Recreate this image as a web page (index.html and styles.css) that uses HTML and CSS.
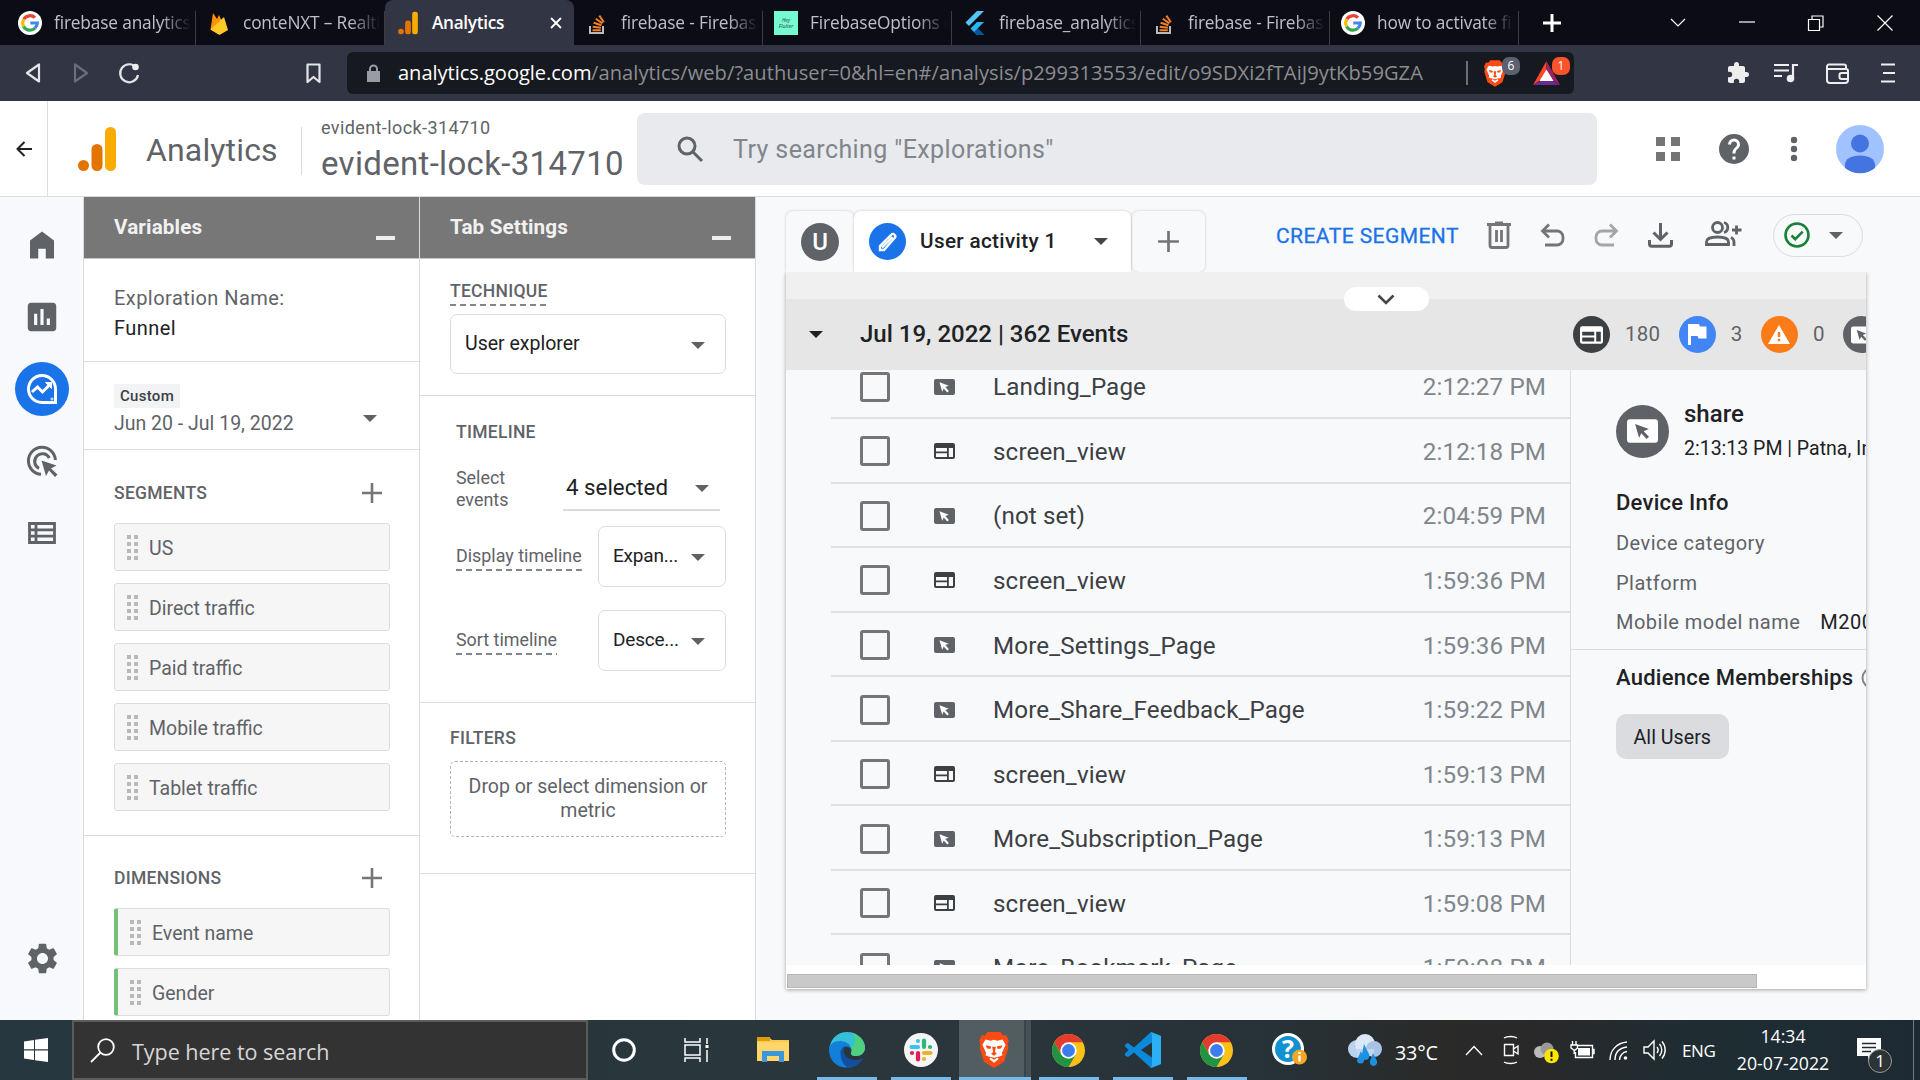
FILE: index.html
```
<!DOCTYPE html>
<html lang="en">
<head>
<meta charset="utf-8">
<title>Analytics</title>
<link rel="stylesheet" href="styles.css">
</head>
<body>
<svg width="0" height="0" class="sprite">
  <symbol id="google" viewBox="0 0 24 24"><circle cx="12" cy="12" r="12" fill="#fff"/><g fill="none" stroke-width="3.2"><path d="M5.8 8.2A7.3 7.3 0 0 1 17 6.7" stroke="#ea4335"/><path d="M5.6 15.4a7.3 7.3 0 0 1 .2-7.2" stroke="#fbbc05"/><path d="M17 17.2A7.3 7.3 0 0 1 5.6 15.4" stroke="#34a853"/><path d="M12.3 12h7a7.3 7.3 0 0 1-2.3 5.2" stroke="#4285f4"/></g></symbol>
  <symbol id="stack" viewBox="0 0 24 24"><path d="M5 15v7h13v-7" fill="none" stroke="#bcbbbb" stroke-width="2"/><g stroke="#f48024" stroke-width="2"><path d="M7.500 19.200h8.300M7.700 15.800l8.200.9M8.600 11.800l7.800 2.400M10.800 7.800l6.600 4.600M14.300 4.600l4.600 6.600"/></g></symbol>
  <symbol id="home" viewBox="0 0 24 24"><path d="M4 21V9l8-6 8 6v12h-5.500v-6.500h-5V21z"/></symbol>
  <symbol id="chart" viewBox="0 0 24 24"><path d="M19 3H5c-1.100 0-2 .9-2 2v14c0 1.100.9 2 2 2h14c1.100 0 2-.9 2-2V5c0-1.100-.9-2-2-2zM9 17H7v-7h2zm4 0h-2V7h2zm4 0h-2v-4h2z"/></symbol>
  <symbol id="gear" viewBox="0 0 24 24"><path d="M19.140 12.940c.04-.3.06-.61.06-.94 0-.32-.02-.64-.07-.94l2.030-1.580c.18-.14.23-.41.12-.61l-1.920-3.320c-.12-.22-.37-.29-.59-.22l-2.390.96c-.5-.38-1.030-.7-1.620-.94l-.36-2.540c-.04-.24-.24-.41-.48-.41h-3.840c-.24 0-.43.17-.47.41l-.36 2.540c-.59.24-1.130.57-1.620.94l-2.390-.96c-.22-.08-.47 0-.59.22L2.740 8.870c-.12.21-.08.47.12.61l2.030 1.580c-.05.3-.09.63-.09.94s.02.64.07.94l-2.030 1.580c-.18.14-.23.41-.12.61l1.920 3.320c.12.22.37.29.59.22l2.390-.96c.5.38 1.030.7 1.620.94l.36 2.540c.05.24.24.41.48.41h3.840c.24 0 .44-.17.47-.41l.36-2.540c.59-.24 1.130-.56 1.620-.94l2.390.96c.22.08.47 0 .59-.22l1.920-3.320c.12-.22.07-.47-.12-.61zM12 15.600c-1.980 0-3.600-1.620-3.600-3.600s1.620-3.600 3.600-3.600 3.600 1.620 3.600 3.600-1.620 3.600-3.600 3.600z"/></symbol>
  <symbol id="plus" viewBox="0 0 24 24"><path d="M12 2v20M2 12h20" fill="none" stroke="currentColor" stroke-width="2.600"/></symbol>
  <symbol id="arrow" viewBox="0 0 14 7"><path d="M0 0h14L7 7z"/></symbol>
  <symbol id="grip" viewBox="0 0 11 25"><path d="M0 0h4v4H0zM7 0h4v4H7zM0 7h4v4H0zM7 7h4v4H7zM0 14h4v4H0zM7 14h4v4H7zM0 21h4v4H0zM7 21h4v4H7z"/></symbol>
  <symbol id="event" viewBox="0 0 21 16"><rect width="21" height="16" rx="2"/><path class="cut" d="M5.500 3.200l9.300 3.500-3.500 1.400 3.600 3.800-1.600 1.500-3.600-3.800-1.500 3.200z"/></symbol>
  <symbol id="screen" viewBox="0 0 21 16"><path fill-rule="evenodd" d="M2 0h17a2 2 0 0 1 2 2v12a2 2 0 0 1-2 2H2a2 2 0 0 1-2-2V2a2 2 0 0 1 2-2zM2 5v3.500h11V5zM2 10.200V14h11v-3.800zM14.800 5v9H19V5z"/></symbol>
  <symbol id="brave" viewBox="0 0 28 34"><path d="M8 0h12l2.500 3.200L25.500 3 28 8l-1 3 .5 4-4 13L14 34 4.500 28 .5 15 1 11 0 8l2.500-5 3 .2z" fill="#fb4a14"/><path d="M6 7l5 1.200 3-.8 3 .8L22 7l3 5-3.500 7.500.5 2.500-5 2 1.500 1.500L14 29l-4.500-3.500L11 24l-5-2 .5-2.500L3 12z" fill="#fff"/><path d="M6 12.500l5.500 1.200-1 2.300-3-.5zM22 12.500l-5.500 1.200 1 2.300 3-.5zM12.300 14h3.400l-.8 5 1.800 1.500L14 22.500l-2.700-2 1.800-1.500zM9 23.200l5 1.200 5-1.200-5 3z" fill="#fb4a14"/></symbol>
  <symbol id="chrome" viewBox="0 0 34 34"><circle cx="17" cy="17" r="17" fill="#fbc116"/><path d="M2.300 8.500A17 17 0 0 1 31.700 8.500H17l-7.400 12.700z" fill="#e33b2e"/><path d="M2.300 8.500A17 17 0 0 0 17 34l7.400-12.700-14.800 0z" fill="#229342"/><circle cx="17" cy="17" r="8.500" fill="#fff"/><circle cx="17" cy="17" r="6.600" fill="#3b7ded"/></symbol>
  <symbol id="ga" viewBox="0 0 38 44"><rect x="27" width="11" height="44" rx="5.500" fill="#f9ab00"/><rect x="13.500" y="17" width="11" height="27" rx="5.500" fill="#e37400"/><circle cx="5.500" cy="38.500" r="5.500" fill="#e37400"/></symbol>
</svg>

<div class="tabs">
  <div class="tab"><svg class="fav"><use href="#google"/></svg><span>firebase analytics</span></div>
  <div class="tab"><svg class="fav" viewBox="0 0 24 24"><path d="M3.500 18.500L6 2l4 6 2-4 7 15-8 4z" fill="#ff9100"/><path d="M3.500 18.500L17 6l4 13-8.500 5z" fill="#ffca28"/></svg><span>conteNXT – Realtime</span></div>
  <div class="tab active"><svg class="fav" viewBox="-2 -1 42 46"><use href="#ga" width="38" height="44"/></svg><b>Analytics</b><svg class="close" viewBox="0 0 12 12"><path d="M1 1l10 10M11 1L1 11" stroke="#fff" stroke-width="1.800"/></svg></div>
  <div class="tab"><svg class="fav"><use href="#stack"/></svg><span>firebase - Firebase</span></div>
  <div class="tab"><i class="fav mint"><em>Hey<br>Flutter</em></i><span>FirebaseOptions c</span></div>
  <div class="tab"><svg class="fav" viewBox="0 0 24 24"><path d="M14 0h7L6 15l-3.500-3.500z" fill="#54c5f8"/><path d="M14 11h7l-6.500 6.500L21 24h-7l-6.500-6.500z" fill="#29b6f6"/><path d="M11 21l3.500-3.500L21 24h-7z" fill="#01579b"/></svg><span>firebase_analytics</span></div>
  <div class="tab"><svg class="fav"><use href="#stack"/></svg><span>firebase - Firebase</span></div>
  <div class="tab"><svg class="fav"><use href="#google"/></svg><span>how to activate firebase</span></div>
  <svg class="newtab" viewBox="0 0 18 18"><path d="M9 0v18M0 9h18" stroke="#fff" stroke-width="3"/></svg>
  <div class="winctl">
    <svg width="16" height="9"><path d="M1 1l7 7 7-7"/></svg>
    <svg width="16" height="9"><path d="M0 4h16"/></svg>
    <svg width="16" height="16"><path d="M.5 4.500h11v11H.5zM4 4V1h11v11h-3"/></svg>
    <svg width="16" height="16"><path d="M.5.5l15 15M15.500.5l-15 15"/></svg>
  </div>
</div>

<div class="toolbar">
  <svg class="back" width="16" height="20"><path d="M14 1.500v17L2 10z"/></svg>
  <svg class="fwd" width="16" height="20"><path d="M2 1.500v17L14 10z"/></svg>
  <svg class="reload" width="22" height="22"><path d="M18.500 6A9 9 0 1 0 20 13"/><circle cx="17.500" cy="5" r="3.300"/></svg>
  <svg class="bookmark" width="16" height="21"><path d="M1.500 1.500h12v17.500l-6-5-6 5z"/></svg>
  <div class="url">
    <svg class="lock" width="13" height="17"><path d="M0 6h13v11H0z"/><path d="M3 7V4a3.500 3.500 0 0 1 7 0v3" fill="none" stroke="#9a9ca5" stroke-width="2"/></svg>
    <div class="addr"><strong>analytics.google.com</strong><span>/analytics/web/?authuser=0&amp;hl=en#/analysis/p299313553/edit/o9SDXi2fTAiJ9ytKb59GZA</span></div>
    <div class="shields"><svg width="22" height="27"><use href="#brave"/></svg><i>6</i></div>
    <div class="bat"><svg width="27" height="24" viewBox="0 0 27 24"><path d="M13.500 0L0 24l13.500-9z" fill="#ff4724"/><path d="M13.500 0L27 24l-13.500-9z" fill="#9e1f63"/><path d="M0 24h27l-13.500-8z" fill="#662d91"/><path d="M13.500 8.500l7 11.500h-14z" fill="#fff"/></svg><i>1</i></div>
  </div>
  <div class="ext">
    <svg width="22" height="22" viewBox="1 1 22 22"><path d="M20.500 11H19V7c0-1.100-.9-2-2-2h-4V3.500a2.500 2.500 0 0 0-5 0V5H4c-1.100 0-2 .9-2 2v3.800h1.500a2.700 2.700 0 0 1 0 5.400H2V20c0 1.100.9 2 2 2h3.800v-1.500a2.700 2.700 0 0 1 5.400 0V22H17c1.100 0 2-.9 2-2v-4h1.500a2.500 2.500 0 0 0 0-5z"/></svg>
    <svg width="24" height="20" fill="none" stroke="#eee" stroke-width="2.200"><path d="M0 2h15M0 7.500h15M0 13h8M24 2h-5v13"/><circle cx="16.500" cy="15.500" r="2.700" fill="#eee"/></svg>
    <svg width="24" height="21" fill="none" stroke="#eee" stroke-width="2"><path d="M20 6V3.500a2 2 0 0 0-2-2H3a2 2 0 0 0-2 2V17a3 3 0 0 0 3 3h15a3 3 0 0 0 3-3V8a2 2 0 0 0-2-2H2M22 10h-6.500a2 2 0 0 0-2 2v2a2 2 0 0 0 2 2H22"/></svg>
    <svg width="14" height="20" stroke="#eee" stroke-width="2"><path d="M0 1.500h14M2 10h12M0 18.500h14"/></svg>
  </div>
</div>

<header class="apphead">
  <div class="leave"><svg width="16" height="16" fill="none" stroke="#202124" stroke-width="2"><path d="M16 8H2M8.500 1L1.500 8l7 7"/></svg></div>
  <svg class="galogo"><use href="#ga"/></svg>
  <div class="product">Analytics</div>
  <div class="property"><small>evident-lock-314710</small><span>evident-lock-314710</span></div>
  <div class="search"><svg width="28" height="28" viewBox="0 0 28 28" fill="none" stroke="#5f6368" stroke-width="3"><circle cx="11" cy="11" r="8"/><path d="M17 17l9 9"/></svg><span>Try searching "Explorations"</span></div>
  <div class="headicons">
    <svg width="24" height="24" fill="#757575"><path d="M0 0h9v9H0zM15 0h9v9h-9zM0 15h9v9H0zM15 15h9v9h-9z"/></svg>
    <svg width="30" height="30" viewBox="2 2 20 20" fill="#5f6368"><path d="M12 2a10 10 0 1 0 0 20 10 10 0 0 0 0-20zm1 17h-2v-2h2zm2.070-7.750l-.9.92C13.450 12.900 13 13.500 13 15h-2v-.5c0-1.100.45-2.100 1.170-2.830l1.240-1.260c.37-.36.59-.86.59-1.410a2 2 0 0 0-4 0H8a4 4 0 0 1 8 0c0 .88-.36 1.680-.93 2.250z"/></svg>
    <svg width="8" height="26" fill="#5f6368"><circle cx="4" cy="4" r="3.200"/><circle cx="4" cy="13" r="3.200"/><circle cx="4" cy="22" r="3.200"/></svg>
    <svg width="48" height="48" viewBox="0 0 48 48"><circle cx="24" cy="24" r="24" fill="#a0c3ff"/><circle cx="24" cy="18.500" r="9" fill="#4374e0"/><path d="M9 43v-3c0-6 6-9.500 15-9.500S39 34 39 40v3a24 24 0 0 1-30 0z" fill="#4374e0"/></svg>
  </div>
</header>

<main>
  <nav class="rail">
    <div><svg width="36" height="36"><use href="#home"/></svg></div>
    <div><svg width="38" height="38"><use href="#chart"/></svg></div>
    <div class="on"><svg width="32" height="32" viewBox="0 0 32 32" fill="none" stroke="#fff" stroke-width="3"><path d="M29.500 16A13.500 13.500 0 1 0 16 29.500h13.500z"/><path d="M6 19l5.500-5 5 5 8-8"/><path d="M19.500 9.500h6v6z" fill="#fff" stroke-width="1"/><circle cx="26" cy="26" r="1" stroke-width="1"/></svg></div>
    <div><svg width="32" height="32" viewBox="0 0 32 32" fill="none" stroke="#5f6368" stroke-width="3"><path d="M15 29.300A13.500 13.500 0 1 1 29.400 15"/><path d="M13 23.300A7.700 7.700 0 1 1 23.300 13"/><path d="M15.500 15.500l15 5-5.500 3 6.500 6-2.500 2.500-6-6.500-3 5.500z" fill="#5f6368" stroke="none"/></svg></div>
    <div><svg width="28" height="22" fill="none" stroke="#5f6368" stroke-width="2.800"><path d="M1.500 1.500h25v19h-25zM8 1v20M1 7.800h26M1 14.200h26"/></svg></div>
    <div class="admin"><svg width="37" height="37"><use href="#gear"/></svg></div>
  </nav>

  <section class="panel">
    <h2>Variables<i></i></h2>
    <div class="name"><span>Exploration Name:</span><b>Funnel</b></div>
    <div class="dates"><div><small>Custom</small><span>Jun 20 - Jul 19, 2022</span></div><svg class="arr"><use href="#arrow"/></svg></div>
    <div class="group segs">
      <h3>SEGMENTS<svg><use href="#plus"/></svg></h3>
      <div class="item"><svg><use href="#grip"/></svg><span>US</span></div>
      <div class="item"><svg><use href="#grip"/></svg><span>Direct traffic</span></div>
      <div class="item"><svg><use href="#grip"/></svg><span>Paid traffic</span></div>
      <div class="item"><svg><use href="#grip"/></svg><span>Mobile traffic</span></div>
      <div class="item"><svg><use href="#grip"/></svg><span>Tablet traffic</span></div>
    </div>
    <div class="group dims">
      <h3>DIMENSIONS<svg><use href="#plus"/></svg></h3>
      <div class="item"><svg><use href="#grip"/></svg><span>Event name</span></div>
      <div class="item"><svg><use href="#grip"/></svg><span>Gender</span></div>
    </div>
  </section>

  <section class="panel">
    <h2>Tab Settings<i></i></h2>
    <div class="technique"><h3 class="dash">TECHNIQUE</h3><div class="select"><span>User explorer</span><svg class="arr"><use href="#arrow"/></svg></div></div>
    <div class="timeline">
      <h3>TIMELINE</h3>
      <div class="row ev"><label>Select<br>events</label><div class="under"><span>4 selected</span><svg class="arr"><use href="#arrow"/></svg></div></div>
      <div class="row"><label class="dash">Display timeline</label><div class="select"><span>Expan...</span><svg class="arr"><use href="#arrow"/></svg></div></div>
      <div class="row"><label class="dash">Sort timeline</label><div class="select"><span>Desce...</span><svg class="arr"><use href="#arrow"/></svg></div></div>
    </div>
    <div class="filters"><h3>FILTERS</h3><div class="drop">Drop or select dimension or metric</div></div>
  </section>

  <section class="work">
    <div class="bar">
      <div class="wtab u"><i>U</i></div>
      <div class="wtab cur"><i><svg width="19" height="20" viewBox="0 0 19 20" fill="none" stroke="#fff" stroke-width="2.400"><path d="M2 18v-4L13.500 2.500a1.800 1.800 0 0 1 2.700 0l.6.6a1.800 1.800 0 0 1 0 2.700L6 18zM4 15.500L14.500 5"/></svg></i><span>User activity 1</span><svg class="arr"><use href="#arrow"/></svg></div>
      <div class="wtab add"><svg width="25" height="25"><use href="#plus"/></svg></div>
      <div class="actions">
        <span>CREATE SEGMENT</span>
        <svg width="24" height="28" fill="none" stroke="#757575" stroke-width="2.800"><path d="M3 4v20.500a2 2 0 0 0 2 2h14a2 2 0 0 0 2-2V4"/><path d="M0 3.500h24M8 2h8M9.500 9v12M14.500 9v12"/></svg>
        <svg width="25" height="24" fill="none" stroke="#757575" stroke-width="2.800"><path d="M5 22h12a6 6 0 0 0 6-6v-2a6 6 0 0 0-6-6H3M9 1.500L2.500 8 9 14.500"/></svg>
        <svg width="25" height="24" fill="none" stroke="#a5a5a5" stroke-width="2.800"><path d="M20 22H8a6 6 0 0 1-6-6v-2a6 6 0 0 1 6-6h14M16 1.500L22.500 8 16 14.500"/></svg>
        <svg width="25" height="25" fill="none" stroke="#5f6368" stroke-width="3"><path d="M12.500 0v16M5.500 9.500l7 7 7-7M1.500 17v4a2.200 2.200 0 0 0 2.200 2.200h17.600a2.200 2.200 0 0 0 2.200-2.200v-4"/></svg>
        <svg width="37" height="25" fill="none" stroke="#5f6368" stroke-width="2.800"><circle cx="12.500" cy="6.500" r="5"/><path d="M1.500 23.500V21c0-3.500 5.500-5 11-5s11 1.500 11 5v2.500zM19 1.500a5.200 5.200 0 0 1 0 10M26 16.500c2 1 3 2.500 3 4.500V25M31.500 4.500v9M27 9h9.500"/></svg>
        <div class="status"><svg width="26" height="26" fill="none" stroke="#188038" stroke-width="2.600"><circle cx="13" cy="13" r="11.500"/><path d="M7.500 13.500l3.700 3.700 7.500-7.500"/></svg><svg class="arr"><use href="#arrow"/></svg></div>
      </div>
    </div>
    <div class="canvas">
      <div class="strip"><button><svg width="18" height="11"><path d="M1.500 1.500L9 9l7.500-7.500" fill="none" stroke="#444746" stroke-width="2.600"/></svg></button></div>
      <div class="day">
        <svg class="arr"><use href="#arrow"/></svg><b>Jul 19, 2022 | 362 Events</b>
        <div class="counts">
          <i class="dark"><svg width="23" height="18"><use href="#screen"/></svg></i><span>180</span>
          <i class="blue"><svg width="20" height="21"><path d="M1 0h11l1 2.500h6.500v12h-8l-1-2.500H4v9H1z"/></svg></i><span>3</span>
          <i class="orange"><svg width="22" height="19"><path fill-rule="evenodd" d="M11 0l11 19H0zM9.800 7v5h2.400V7zM9.800 13.800v2.400h2.400v-2.400z"/></svg></i><span>0</span>
          <i class="grey"><svg width="22" height="18"><use href="#event"/></svg></i>
        </div>
      </div>
      <div class="body">
        <div class="events">
          <div class="erow"><i></i><svg class="ie"><use href="#event"/></svg><span>Landing_Page</span><time>2:12:27 PM</time></div>
          <div class="erow"><i></i><svg><use href="#screen"/></svg><span>screen_view</span><time>2:12:18 PM</time></div>
          <div class="erow"><i></i><svg class="ie"><use href="#event"/></svg><span>(not set)</span><time>2:04:59 PM</time></div>
          <div class="erow"><i></i><svg><use href="#screen"/></svg><span>screen_view</span><time>1:59:36 PM</time></div>
          <div class="erow"><i></i><svg class="ie"><use href="#event"/></svg><span>More_Settings_Page</span><time>1:59:36 PM</time></div>
          <div class="erow"><i></i><svg class="ie"><use href="#event"/></svg><span>More_Share_Feedback_Page</span><time>1:59:22 PM</time></div>
          <div class="erow"><i></i><svg><use href="#screen"/></svg><span>screen_view</span><time>1:59:13 PM</time></div>
          <div class="erow"><i></i><svg class="ie"><use href="#event"/></svg><span>More_Subscription_Page</span><time>1:59:13 PM</time></div>
          <div class="erow"><i></i><svg><use href="#screen"/></svg><span>screen_view</span><time>1:59:08 PM</time></div>
          <div class="erow"><i></i><svg class="ie"><use href="#event"/></svg><span>More_Bookmark_Page</span><time>1:59:08 PM</time></div>
        </div>
        <aside>
          <div class="info">
            <div class="who"><i><svg width="31" height="24"><use href="#event"/></svg></i><div><b>share</b><span>2:13:13 PM | Patna, India</span></div></div>
            <h4>Device Info</h4>
            <p>Device category</p><p>Platform</p><p>Mobile model name<em>M2006C3LI</em></p>
          </div>
          <div class="aud"><h4>Audience Memberships<svg width="22" height="22" fill="none" stroke="#80868b" stroke-width="2"><circle cx="11" cy="11" r="9.500"/></svg></h4><span>All Users</span></div>
        </aside>
      </div>
      <div class="scroll"><i></i></div>
    </div>
  </section>
</main>

<footer class="taskbar">
  <svg class="start" width="24" height="24" fill="#fff"><path d="M0 3.400L10 2v9.300H0zM11 1.800L24 0v11.300H11zM0 12.400h10V22L0 20.600zM11 12.400h13V24l-13-1.800z"/></svg>
  <div class="find"><svg width="25" height="25" fill="none" stroke="#fff" stroke-width="1.800"><circle cx="16" cy="9" r="7.800"/><path d="M10.500 14.500L1 24"/></svg><span>Type here to search</span></div>
  <div class="apps">
    <div class="app"><svg width="24" height="24"><circle cx="12" cy="12" r="10.300" fill="none" stroke="#fff" stroke-width="3"/></svg></div>
    <div class="app"><svg width="25" height="24" fill="none" stroke="#fff" stroke-width="1.500"><path d="M1 0v4h15V0M1 24v-4h15v4M1 7h15v10H1zM23 0v6M23 12v12"/><path d="M21.500 7h3v3h-3z" fill="#fff" stroke="none"/></svg></div>
    <div class="app"><svg width="32" height="28"><path d="M0 1h12l3 3h17v21H0z" fill="#fdc84b"/><path d="M0 1h13v4H0z" fill="#dd9c0c"/><path d="M0 6h32v19H0z" fill="#ffd66b"/><path d="M5 26V15h22v11h-5v-6H10v6z" fill="#3a96dd"/></svg></div>
    <div class="app run"><svg width="36" height="36" viewBox="0 0 36 36"><path d="M.3 16C2 6 9 0 18 0c11 0 18 8 18 15.500C36 21 32 24 27 24c-4 0-5.500-1.500-5-3 2-4-1-8-8-9C8 11 2 12 .3 16z" fill="#35bfd8"/><path d="M24 1.200c7.500 3 12 8.500 12 14.300C36 21 32 24 27 24c-4 0-5.500-1.500-5-3 1-2 .8-4 0-5.500 4-2 5-8 2-14.300z" fill="#55d468" opacity=".8"/><path d="M0 18C0 12 5 9 11 9c6 0 11 3.500 11.300 8.500-1-1.800-2.500-2.700-4.300-2.700-3 0-5 2.700-5 6 0 6 4 10.700 10 13.700C11 38.500 0 30 0 18z" fill="#1180d8"/><path d="M11.500 21c0-4 2.500-7 6-7-2.500 1.500-3.500 4-2.500 7 2 6 10 9 18 5.500.6-.2.900.2.600.7C31 31.500 26 35.500 20 36c-5-2-8.500-8-8.500-15z" fill="#12509f"/></svg></div>
    <div class="app run"><svg width="34" height="34" viewBox="0 0 34 34"><circle cx="17" cy="17" r="17" fill="#f6f5f6"/><g fill="none" stroke-width="4.200" stroke-linecap="round"><path d="M14 8v.01M7.500 14h6.500" stroke="#36c5f0"/><path d="M20 7.500v6.500M26 14v.01" stroke="#2eb67d"/><path d="M20 26v.01M20 20h6.500" stroke="#ecb22e"/><path d="M14 26.500V20M8 20v.01" stroke="#e01e5a"/></g></svg></div>
    <div class="app run open"><svg width="30" height="36"><use href="#brave"/></svg></div>
    <div class="app run"><svg width="33" height="33"><use href="#chrome"/></svg></div>
    <div class="app run"><svg width="36" height="36" viewBox="0 0 36 36"><path d="M26 0l10 4v28l-10 4L9 20.500 3 25l-3-1.500v-2L3.700 18 0 14.500v-2L3 11l6 4.500zM27 10.500L16 18l11 7.500z" fill="#0a8ad8"/><path d="M26 0l10 4v28l-10 4 1-3V3z" fill="#2bb0f5"/></svg></div>
    <div class="app run"><svg width="33" height="33"><use href="#chrome"/></svg></div>
    <div class="app help"><svg width="36" height="34" viewBox="0 0 36 34"><circle cx="17" cy="16" r="16" fill="#fff"/><circle cx="17" cy="16" r="13" fill="#1191d0"/><text x="17" y="25" text-anchor="middle" font-size="25" font-weight="700" fill="#fff">?</text><circle cx="28.500" cy="24" r="7.500" fill="#f5a623"/><path d="M28.500 19v2M28.500 22.500v6" stroke="#fff" stroke-width="2.400"/></svg></div>
  </div>
  <div class="tray">
    <svg class="wx" width="34" height="32" viewBox="0 0 34 32"><circle cx="9" cy="15" r="9" fill="#b9d2ef"/><circle cx="17" cy="10" r="10" fill="#dce8f7"/><circle cx="26" cy="15" r="8" fill="#a9c3e6"/><path d="M9 15h17v7H9z" fill="#c3d6ee"/><path d="M16 10l5 10a4 4 0 1 1-7 0zM13 17l3 9a3.500 3.500 0 1 1-7 0zM25 19l4 8a3.700 3.700 0 1 1-7 0z" fill="#1e90e0"/></svg>
    <span class="deg">33°C</span>
    <svg class="up" width="18" height="11"><path d="M1 10l8-8.500L17 10"/></svg>
    <svg class="cam" width="17" height="32"><path d="M1.500 10.500h9v11h-9zM10.500 15l4.500-3v8l-4.500-3M1 4a8 3.500 0 0 1 13 0M1 28a8 3.500 0 0 0 13 0"/></svg>
    <svg class="cloud" width="25" height="22"><circle cx="6" cy="10" r="6" fill="#bbb" stroke="none"/><circle cx="13" cy="7" r="6.500" fill="#999" stroke="none"/><circle cx="17.500" cy="14" r="7.300" fill="#ffe600" stroke="none"/><path d="M17.500 9.500v5.500M17.500 16.800v2" stroke="#111" stroke-width="2"/></svg>
    <svg class="batt" width="25" height="19"><path d="M8 4.500h14.500v12H5.500V11M22.500 8.500H24v4h-1.500M2.500 0v4M6 0v4M1 4h6.500v3L4.500 9.500 1 7zM4.200 9v4"/><path d="M8 7h12v7.500H8z" fill="#fff" stroke="none"/></svg>
    <svg class="wifi" width="20" height="20"><path d="M1 19C1 9 8 2 18 1M6 19C6 12 10 7 18 6M10.500 19c0-4 3-8 7.500-8.500"/><circle cx="16.500" cy="17" r="1.800" fill="#fff" stroke="none"/></svg>
    <svg class="vol" width="23" height="20"><path d="M1 7h4l6-6v18l-6-6H1zM14 7a5 5 0 0 1 0 6M16.500 4a9 9 0 0 1 0 12M19 1.500a13 13 0 0 1 0 17"/></svg>
    <span class="eng">ENG</span>
    <div class="clock"><span>14:34</span><span>20-07-2022</span></div>
    <div class="note"><svg width="24" height="24"><path d="M0 0h24v18h-8l-5 6v-6H0z" fill="#fff" stroke="none"/><path d="M5 5.500h14M5 9.500h14M5 13.500h9" stroke="#1d2a32"/></svg><i>1</i></div>
    <div class="peek"></div>
  </div>
</footer>
</body>
</html>
```
FILE: styles.css
```
* { box-sizing: border-box; }
body { margin: 0; width: 1920px; height: 1080px; overflow: hidden; display: flex; flex-direction: column; font-family: Roboto, "Liberation Sans", sans-serif; color: #202124; background: #f8f9fb; }
.sprite { position: absolute; }
svg { flex: none; display: block; overflow: visible; }
i, em { font-style: normal; }
h2, h3, h4, p { margin: 0; }

/* browser chrome */
.tabs { height: 45px; flex: none; background: #0b0c15; display: flex; align-items: center; padding-left: 7px; font-family: "Open Sans", sans-serif; }
.tab { width: 189px; height: 45px; display: flex; align-items: center; gap: 12px; padding-left: 11px; font-size: 17.3px; color: #bfc0c6; position: relative; flex: none; }
.tab::after { content: ""; position: absolute; right: 0; top: 11px; bottom: 0; width: 1px; background: #3c3c42; }
.tab span { width: 137px; overflow: hidden; white-space: nowrap; letter-spacing: -.15px; -webkit-mask-image: linear-gradient(90deg, #000 78%, transparent 100%); mask-image: linear-gradient(90deg, #000 78%, transparent 100%); }
.tab.active { background: #323544; border-radius: 8px 8px 0 0; color: #fff; }
.tab.active::after { display: none; }
.tab b { font-size: 17.2px; letter-spacing: -.3px; font-weight: 600; width: 106px; margin-right: 0; }
.close { width: 12px; height: 12px; }
.fav { width: 24px; height: 24px; flex: none; }
.mint { background: #74fbd0; display: flex; align-items: center; justify-content: center; }
.mint em { font: italic 5px/6px "Open Sans", sans-serif; color: #333; text-align: center; }
.newtab { width: 18px; height: 18px; margin-left: 24px; }
.winctl { display: flex; align-items: center; margin-left: auto; padding-right: 27px; gap: 53px; }
.winctl svg { fill: none; stroke: #fff; stroke-width: 1.2; }
.toolbar { height: 56px; flex: none; background: #323544; display: flex; align-items: center; padding: 0 25px 0 25px; }
.toolbar > svg { fill: none; stroke: #e4e5e8; stroke-width: 2.2; stroke-linejoin: round; }
.toolbar .fwd { margin-left: 32px; stroke: #6b6d79; }
.reload { margin-left: 29px; }
.reload circle { fill: #eee; stroke: none; }
.bookmark { margin-left: 166px; }
.url { margin-left: 25px; width: 1227px; height: 42px; border-radius: 6px; background: #171920; display: flex; align-items: center; padding-left: 20px; font: 20.1px "Open Sans", sans-serif; flex: none; }
.lock { fill: #9a9ca5; margin-right: 18px; }
.addr { white-space: nowrap; width: 1068px; display: flex; padding-bottom: 2px; }
.addr strong { font-weight: 400; color: #fff; letter-spacing: -.05px; width: 193px; }
.addr span { color: #8b8d92; letter-spacing: .06px; }
.shields { display: flex; border-left: 2px solid #6b6d79; height: 24px; align-items: center; padding-left: 16px; width: 67px; position: relative; }
.bat { position: relative; }
.shields i, .bat i { position: absolute; width: 18px; height: 18px; border-radius: 7px; font: 12px/18px "Open Sans", sans-serif; color: #fff; text-align: center; }
.shields i { left: 34px; top: -4px; background: #5d6070; }
.bat i { left: 19px; top: -4px; background: #fb542b; }
.ext { margin-left: auto; display: flex; align-items: center; gap: 25.5px; }
.ext svg:first-child { fill: #eee; }
.ext svg:nth-child(3) { margin-left: 2px; }
.ext svg:last-child { margin-left: 6px; }

/* Analytics header */
.apphead { height: 96px; flex: none; background: #fff; border-bottom: 1px solid #dadce0; display: flex; align-items: center; color: #5f6368; }
.leave { width: 48px; height: 95px; border-right: 1px solid #dadce0; display: flex; align-items: center; padding-left: 16px; }
.galogo { width: 38px; height: 44px; margin: 1px 0 0 30px; }
.product { font-size: 32px; width: 155px; margin-left: 30px; padding-top: 3px; letter-spacing: .15px; }
.property { height: 48px; border-left: 1px solid #dadce0; padding-left: 19px; width: 336px; display: flex; flex-direction: column; justify-content: center; margin-top: 5px; white-space: nowrap; }
.property small { font-size: 18px; line-height: 22px; letter-spacing: .4px; margin-top: -2px; }
.property span { font-size: 33px; line-height: 38px; letter-spacing: .32px; margin-top: 6px; }
.search { width: 960px; height: 72px; border-radius: 8px; background: #e8eaed; display: flex; align-items: center; padding-left: 39px; gap: 29px; color: #80868b; font-size: 25px; letter-spacing: .4px; }
.search span { padding-top: 1px; }
.headicons { margin-left: auto; padding-right: 36px; display: flex; align-items: center; }
.headicons svg + svg { margin-left: 39px; }
.headicons svg + svg + svg { margin-left: 41px; }
.headicons svg + svg + svg + svg { margin-left: 38px; }

/* app body */
main { flex: 1; min-height: 0; display: flex; overflow: hidden; }
.rail { width: 84px; flex: none; border-right: 1px solid #dadce0; background: #f8f9fc; fill: #5f6368; display: flex; flex-direction: column; align-items: center; padding: 12px 0 26px; }
.rail div { width: 72px; height: 72px; display: flex; align-items: center; justify-content: center; flex: none; }
.rail .on { width: 54px; height: 54px; margin: 9px 0; border-radius: 50%; background: #1a73e8; }
.rail .admin { margin-top: auto; padding-left: 1px; }
.panel { width: 336px; flex: none; background: #fff; border-right: 1px solid #dadce0; overflow: hidden; }
.panel h2 { height: 62px; background: #777; color: #f1f1f1; font-size: 20.7px; letter-spacing: .12px; font-weight: 700; border-bottom: 1px solid #c4c4c4; padding: 0 24px 2px 30px; display: flex; align-items: center; justify-content: space-between; }
.panel h2 i { width: 19px; height: 4px; background: #eee; margin-top: 22px; }
.panel h3 { font-size: 17.5px; letter-spacing: .28px; font-weight: 500; color: #5f6368; }
.arr { width: 14px; height: 7px; fill: #616161; }
.name { height: 103px; border-bottom: 1px solid #dadce0; padding: 24px 30px 0; font-size: 20px; line-height: 30px; letter-spacing: .45px; color: #5f6368; }
.name span, .name b { display: block; }
.name b { color: #202124; font-weight: 400; }
.dates { height: 88px; border-bottom: 1px solid #dadce0; padding: 0 42px 0 30px; display: flex; align-items: flex-start; justify-content: space-between; }
.dates small { display: block; width: 66px; height: 24px; margin-top: 22px; background: #f1f3f4; font: 500 15px/25px Roboto, sans-serif; letter-spacing: .3px; text-align: center; color: #3c4043; }
.dates span { display: block; font-size: 19.5px; line-height: 24px; margin-top: 4px; color: #5f6368; }
.dates .arr { margin-top: 53px; }
.group { padding: 25px 29px 0 30px; border-bottom: 1px solid #dadce0; }
.segs { height: 386px; }
.group h3 { display: flex; align-items: center; justify-content: space-between; height: 36px; margin-bottom: 12px; padding-right: 6px; }
.dims { padding-top: 24px; }
.item { height: 48px; margin-bottom: 12px; border: 1px solid #dadce0; border-radius: 3px; background: #f6f6f6; display: flex; align-items: center; font-size: 19.5px; color: #5f6368; padding-left: 12px; gap: 11px; }
.item span { padding-top: 2px; }
.group h3 svg { width: 24px; height: 24px; color: #757575; }
.item svg { width: 11px; height: 25px; fill: #b9b9b9; }
.dims .item { border-left: 4px solid #71c178; }
.dash { display: inline-block; padding-bottom: 4px; background: repeating-linear-gradient(90deg, #80868b 0 6px, transparent 6px 10px) bottom / 100% 2px no-repeat; }
.technique { height: 137px; border-bottom: 1px solid #dadce0; padding: 21px 29px 0 30px; }
.technique .dash { line-height: 22px; display: block; width: 98px; height: 26px; padding: 0; margin-bottom: 8px; }
.select { border: 1px solid #dadce0; border-radius: 7px; height: 61px; display: flex; align-items: center; justify-content: space-between; padding: 0 20px 3px 14px; font-size: 19.5px; }
.technique .select { height: 60px; padding-bottom: 2px; }
.select .arr { margin-top: 4px; }
.timeline { height: 307px; border-bottom: 1px solid #dadce0; padding: 25px 29px 0 36px; }
.timeline h3 { line-height: 22px; }
.row { display: flex; align-items: center; justify-content: space-between; height: 61px; margin-top: 23px; }
.row label { font-size: 17.9px; line-height: 22px; color: #5f6368; }
.row .dash { margin-top: 3px; }
.row.ev { height: 44px; margin: 24px 0 -8px; padding-right: 6px; align-items: flex-start; }
.under { width: 157px; height: 44px; border-bottom: 2px solid #dadce0; display: flex; align-items: center; justify-content: space-between; padding: 0 11px 2px 3px; font-size: 22.3px; }
.under .arr { margin-top: 2px; }
.row .select { width: 128px; font-size: 19px; letter-spacing: -.2px; }
.filters { height: 171px; border-bottom: 1px solid #dadce0; padding: 24px 29px 0 30px; }
.filters h3 { line-height: 22px; }
.drop { margin-top: 12px; height: 76px; border: 1px dashed #b4b4b4; border-radius: 5px; font-size: 19.5px; line-height: 24px; color: #5f6368; text-align: center; padding: 13px 12px; }

/* workspace */
.work { flex: 1; background: #f8f9fb; padding: 14px 0 0 30px; min-width: 0; }
.bar { height: 61px; display: flex; }
.wtab { height: 61px; display: flex; align-items: center; border-radius: 7px 7px 0 0; box-shadow: 0 0 3px rgba(0,0,0,.2); flex: none; }
.wtab i { display: flex; align-items: center; justify-content: center; border-radius: 50%; width: 38px; height: 38px; color: #fff; font-size: 24px; font-weight: 500; background: #5f6368; }
.u { width: 68px; padding-left: 15px; }
.cur { width: 277px; background: #fff; padding-left: 15px; }
.cur i { background: #1a73e8; width: 37px; height: 37px; }
.cur span { margin-left: 14px; font-weight: 500; font-size: 20.7px; letter-spacing: .35px; width: 174px; padding-bottom: 1px; }
.cur .arr { fill: #444746; }
.add { width: 73px; margin-left: 1px; border-radius: 7px; justify-content: center; color: #757575; }
.actions { display: flex; align-items: center; height: 48px; margin-left: 71px; white-space: nowrap; }
.actions > span { font-size: 21px; letter-spacing: .44px; font-weight: 400; -webkit-text-stroke: .3px #1a73e8; color: #1a73e8; width: 211px; padding-top: 2px; }
.actions > svg { margin-right: 29px; }
.actions > svg:nth-of-type(4) { margin-right: 32px; }
.actions > svg:nth-of-type(5) { margin-right: 31px; margin-top: -3px; }
.status { width: 90px; height: 43px; border: 1px solid #dadce0; border-radius: 22px; display: flex; align-items: center; padding-left: 10px; gap: 19px; }
.canvas { width: 1080px; height: 717px; overflow: hidden; box-shadow: 0 1px 4px rgba(0,0,0,.35); clip-path: inset(0 -6px -6px -6px); display: flex; flex-direction: column; }
.strip { height: 27px; background: #f0f0f0; flex: none; display: flex; justify-content: center; padding: 15px 0 0 120px; position: relative; z-index: 1; }
.strip button { width: 85px; height: 24px; flex: none; border: 0; border-radius: 12px; background: #fff; display: flex; align-items: center; justify-content: center; padding: 0; }
.day { height: 71px; flex: none; background: #e6e6e6; display: flex; align-items: center; padding-left: 23px; }
.day .arr { fill: #202124; }
.day b { font-size: 24px; font-weight: 500; margin-left: 37px; width: 713px; flex: none; white-space: nowrap; padding-bottom: 1px; }
.counts { display: flex; align-items: center; color: #5f6368; font-size: 20.5px; letter-spacing: .2px; flex: none; }
.counts i { width: 37px; height: 37px; border-radius: 50%; display: flex; align-items: center; justify-content: center; fill: #fff; flex: none; }
.counts span { margin: 0 18.500px 0 15px; padding-bottom: 1px; }
.dark { background: #3c4043; }
.blue { background: #4285f4; }
.orange { background: #fa7b17; }
.grey { background: #5f6368; }
.grey use, .who use { --cut: #5f6368; }
.cut { fill: var(--cut, #fff); }
.body { flex: 1; min-height: 0; display: flex; overflow: hidden; }
.events { width: 785px; flex: none; border-right: 1px solid #dadce0; padding-left: 45px; }
.events .erow:first-child { margin-top: -15.4px; }
.erow { height: 64.54px; border-bottom: 2px solid #e0e1e4; display: flex; align-items: center; padding: 2px 24px 0 29px; font-size: 24.2px; letter-spacing: .12px; color: #3c4043; }
.erow i { width: 30px; height: 30px; border: 3px solid #757575; border-radius: 3px; margin-right: 44px; flex: none; }
.erow svg { width: 21px; height: 16px; fill: #3c4043; margin-right: 38px; }
.erow .ie { fill: #5f6368; }
.erow span, .erow time { padding-top: 1px; }
.erow time { margin-left: auto; color: #80868b; }
aside { flex: none; width: 420px; white-space: nowrap; }
.info { height: 280px; border-bottom: 1px solid #dadce0; padding: 28px 0 0 45px; }
.who { display: flex; align-items: center; gap: 15px; }
.who i { width: 53px; height: 53px; border-radius: 50%; background: #5f6368; fill: #fff; display: flex; align-items: center; justify-content: center; margin-top: 1px; }
.who b, .who span { display: block; }
.who b { font-size: 24px; line-height: 32px; font-weight: 500; }
.who span { font-size: 19.5px; line-height: 28px; margin-top: 5px; }
h4 { font-size: 22px; line-height: 28px; letter-spacing: .25px; font-weight: 500; }
.info h4 { margin: 26px 0 7px; }
.info p { font-size: 20px; line-height: 39.5px; letter-spacing: .48px; color: #5f6368; }
.info p em { color: #202124; margin-left: 20px; }
.aud { padding: 14px 0 0 45px; }
.aud h4 { display: flex; gap: 8px; align-items: center; }
.aud span { display: inline-block; height: 45px; line-height: 47px; margin-top: 22px; padding: 0 17.500px; border-radius: 10px; background: #dadce0; font-size: 19.7px; color: #202124; }
.scroll { height: 24px; flex: none; background: #fff; padding: 9px 0 0 1px; }
.scroll i { display: block; width: 970px; height: 14px; background: #c9c9c9; border: 1px solid #b5b5b5; }

/* taskbar */
.taskbar { height: 60px; flex: none; display: flex; align-items: center; color: #fff; font-family: "Open Sans", sans-serif; background: linear-gradient(90deg, #26373f 0, #2a363b 50%, #263238 66%, #2a2a29 75%, #29292a 80%, #1f2d33 88%, #1d2a33 100%); }
.start { margin-left: 24px; }
.find { width: 516px; height: 60px; margin-left: 24px; border: 2px solid #5c5c5c; background: #333; display: flex; align-items: center; padding-left: 16px; gap: 17px; font-size: 21.6px; letter-spacing: -.07px; color: #d6d6d6; }
.find span { padding-top: 3px; }
.apps { display: flex; }
.app { width: 60px; height: 60px; margin-right: 14px; display: flex; align-items: center; justify-content: center; }
.app:nth-child(1) { margin-left: 6px; width: 60px; margin-right: 12px; }
.app:nth-child(2) { margin-right: 17px; }
.app:nth-child(3) { width: 60px; }
.run { border-bottom: 3px solid #76b9ed; padding-top: 3px; }
.run:nth-child(5) { margin-right: 8px; }
.open { width: 72px; background: linear-gradient(90deg, #525d62 65px, #36454b 65px 67px, #455156 67px); padding-right: 3px; margin-right: 8px; }
.run:nth-child(n+7) svg { margin-left: -1px; }
.help { margin-right: 0; width: 56px; font-family: "Open Sans", sans-serif; }
.tray { display: flex; align-items: center; margin-left: 31px; height: 60px; flex: 1; }
.tray svg { fill: none; stroke: #fff; stroke-width: 1.4; }
.tray .wx { stroke: none; margin: 0 13px 0 0; }
.deg { font-size: 19.8px; letter-spacing: -.2px; width: 70px; padding-top: 4px; }
.cam { margin-left: 20px; }
.cloud { margin-left: 14px; margin-top: 6px; }
.batt { margin-left: 11px; }
.wifi { margin-left: 14px; margin-top: 2px; }
.vol { margin-left: 14px; }
.eng { font-size: 17px; letter-spacing: -.4px; margin-left: 16px; width: 34px; padding-top: 1px; }
.clock { width: 94px; margin-left: 20px; text-align: center; font-size: 17.7px; line-height: 27px; padding-bottom: 0; }
.clock span { display: block; white-space: nowrap; }
.note { position: relative; margin-left: 27px; }
.note i { position: absolute; left: 11px; top: 11px; width: 24px; height: 24px; border: 1px solid #999; border-radius: 50%; background: #2e3335; font-size: 17px; line-height: 22px; text-align: center; }
.peek { margin-left: auto; width: 7px; height: 60px; border-left: 1px solid #70797d; }
```
